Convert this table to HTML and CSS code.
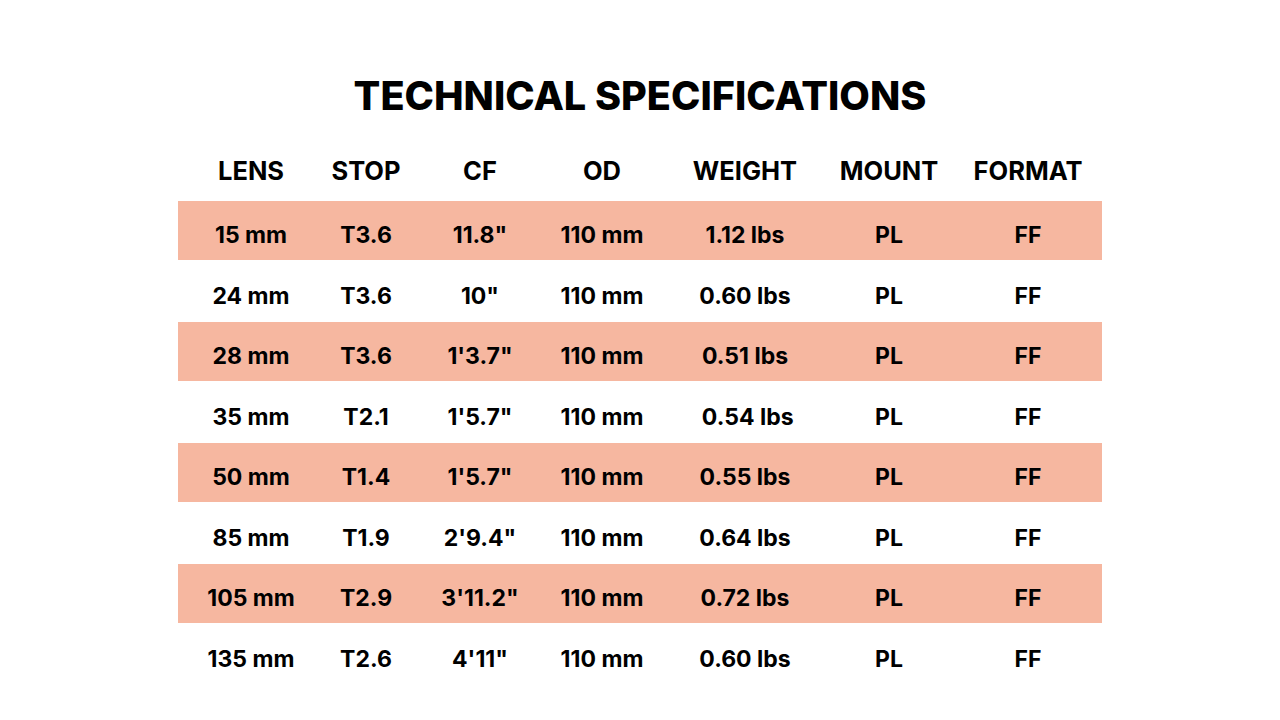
FILE: index.html
```html
<!DOCTYPE html>
<html>
<head>
<meta charset="utf-8">
<link rel="stylesheet" href="styles.css">
</head>
<body>
<main class="page">
  <h1 class="title">TECHNICAL SPECIFICATIONS</h1>
  <div class="table">
    <div class="row head">
      <div>LENS</div><div>STOP</div><div>CF</div><div>OD</div><div>WEIGHT</div><div>MOUNT</div><div>FORMAT</div>
    </div>
    <div class="row odd"><div>15 mm</div><div>T3.6</div><div>11.8"</div><div>110 mm</div><div>1.12 lbs</div><div>PL</div><div>FF</div></div>
    <div class="row even"><div>24 mm</div><div>T3.6</div><div>10"</div><div>110 mm</div><div>0.60 lbs</div><div>PL</div><div>FF</div></div>
    <div class="row odd"><div>28 mm</div><div>T3.6</div><div>1'3.7"</div><div>110 mm</div><div>0.51 lbs</div><div>PL</div><div>FF</div></div>
    <div class="row even"><div>35 mm</div><div>T2.1</div><div>1'5.7"</div><div>110 mm</div><div>&nbsp;0.54 lbs</div><div>PL</div><div>FF</div></div>
    <div class="row odd"><div>50 mm</div><div>T1.4</div><div>1'5.7"</div><div>110 mm</div><div>0.55 lbs</div><div>PL</div><div>FF</div></div>
    <div class="row even"><div>85 mm</div><div>T1.9</div><div>2'9.4"</div><div>110 mm</div><div>0.64 lbs</div><div>PL</div><div>FF</div></div>
    <div class="row odd"><div>105 mm</div><div>T2.9</div><div>3'11.2"</div><div>110 mm</div><div>0.72 lbs</div><div>PL</div><div>FF</div></div>
    <div class="row even"><div>135 mm</div><div>T2.6</div><div>4'11"</div><div>110 mm</div><div>0.60 lbs</div><div>PL</div><div>FF</div></div>
  </div>
</main>
</body>
</html>
```
FILE: styles.css
```css
html, body {
  margin: 0;
  padding: 0;
  background: #ffffff;
}
.page {
  width: 1280px;
  height: 720px;
  font-family: "Inter", "Liberation Sans", sans-serif;
  font-weight: 700;
  color: #000;
  padding-top: 72px;
  box-sizing: border-box;
}
.title {
  margin: 0;
  font-size: 39.6px;
  line-height: 48px;
  font-weight: 800;
  text-align: center;
  letter-spacing: 0;
}
.table {
  margin: 27px 0 0 178px;
  width: 924px;
}
.row {
  display: grid;
  grid-template-columns: 118px 112px 116px 128px 158px 130px 148px;
  padding-left: 14px;
  align-items: center;
  text-align: center;
  white-space: nowrap;
  box-sizing: border-box;
}
.head {
  font-size: 25.5px;
  height: 54px;
  padding-bottom: 8px;
}
.odd, .even {
  font-size: 23px;
  padding-top: 10px;
}
.odd {
  background: #f6b7a0;
  height: 58.5px;
}
.even {
  height: 62.5px;
}
```
